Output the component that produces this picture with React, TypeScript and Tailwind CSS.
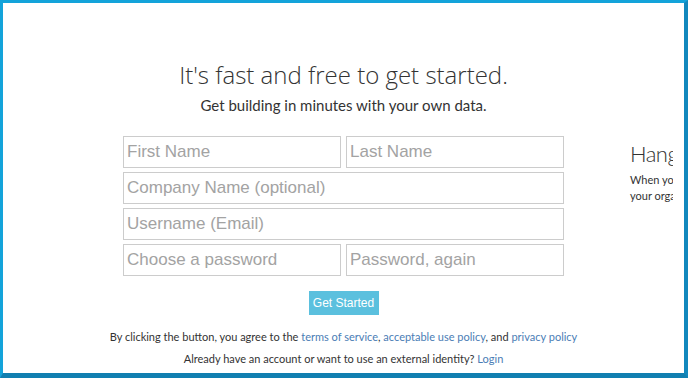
import React from 'react'

const inputCls =
  'h-8 w-full border border-[#cccccc] bg-white px-[3px] text-[17px] leading-none text-[#333] placeholder:text-[#a3a3a3] outline-none font-["Liberation_Sans",Arial,sans-serif]'

function Field({ placeholder }: { placeholder: string }) {
  return <input className={inputCls} placeholder={placeholder} readOnly />
}

export default function App() {
  return (
    <div className="h-[378px] w-[688px] overflow-hidden bg-white border-solid border-t-[3px] border-l-[3px] border-r-[4px] border-b-[5px] border-t-[#13a3da] border-l-[#13a3da] border-r-[#1288bd] border-b-[#117fb0]">
      <div className="h-full w-[670px] overflow-hidden">
        <div className="flex pt-[55px] font-['Lato',sans-serif] text-[#333]">
          <section className="ml-[110px] w-[461px] shrink-0 flex flex-col items-center">
            <h1 className="text-[24px] font-light leading-[34px] text-[#333] whitespace-nowrap font-['Open_Sans',sans-serif]">
              It's fast and free to get started.
            </h1>
            <p className="mt-[3px] text-[15px] leading-5 whitespace-nowrap">
              Get building in minutes with your own data.
            </p>

            <form className="mt-[21px] flex w-[441px] flex-col gap-[4px]">
              <div className="flex gap-[5px]">
                <Field placeholder="First Name" />
                <Field placeholder="Last Name" />
              </div>
              <Field placeholder="Company Name (optional)" />
              <Field placeholder="Username (Email)" />
              <div className="flex gap-[5px]">
                <Field placeholder="Choose a password" />
                <Field placeholder="Password, again" />
              </div>
            </form>

            <button
              type="button"
              className="mt-[15px] h-6 w-[70px] bg-[#5bc0de] text-[12px] text-white font-['Liberation_Sans',Arial,sans-serif]"
            >
              Get Started
            </button>

            <p className="mt-[14px] whitespace-nowrap text-[11px] leading-4">
              By clicking the button, you agree to the{' '}
              <a className="text-[#4a7db5]">terms of service</a>,{' '}
              <a className="text-[#4a7db5]">acceptable use policy</a>, and{' '}
              <a className="text-[#4a7db5]">privacy policy</a>
            </p>
            <p className="mt-[6px] whitespace-nowrap text-[11px] leading-4">
              Already have an account or want to use an external identity?{' '}
              <a className="text-[#4a7db5]">Login</a>
            </p>
          </section>

          <aside className="ml-[56px] w-[240px] shrink-0 pt-[81px]">
            <h2 className="text-[22px] font-light leading-[30px] tracking-[-0.5px] whitespace-nowrap">
              Hang tight
            </h2>
            <p className="mt-[3px] text-[11px] leading-4 whitespace-nowrap">
              When you sign up, we set up a new workspace for
              <br />
              your organization and invite your team.
            </p>
          </aside>
        </div>
      </div>
    </div>
  )
}
